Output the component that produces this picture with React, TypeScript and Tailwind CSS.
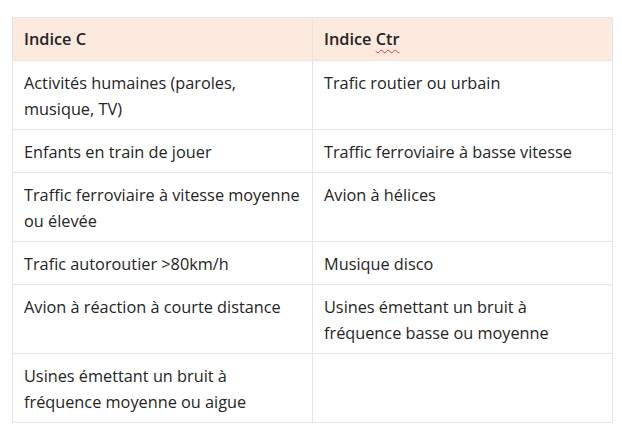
import React from "react";

const rows: [string[], string[]][] = [
  [["Activités humaines (paroles,", "musique, TV)"], ["Trafic routier ou urbain"]],
  [["Enfants en train de jouer"], ["Traffic ferroviaire à basse vitesse"]],
  [["Traffic ferroviaire à vitesse moyenne", "ou élevée"], ["Avion à hélices"]],
  [["Trafic autoroutier >80km/h"], ["Musique disco"]],
  [["Avion à réaction à courte distance"], ["Usines émettant un bruit à", "fréquence basse ou moyenne"]],
  [["Usines émettant un bruit à", "fréquence moyenne ou aigue"], []],
];

function Cell({ lines }: { lines: string[] }) {
  return (
    <td className="border border-[#e5e5e5] px-[11px] pt-[9px] pb-[7px] align-top text-[16.3px] leading-[26px] text-[#242424]">
      {lines.map((l, i) => (
        <React.Fragment key={i}>
          {i > 0 && <br />}
          <span className="whitespace-nowrap">{l}</span>
        </React.Fragment>
      ))}
    </td>
  );
}

export default function App() {
  return (
    <div className="w-[622px] h-[434px] bg-white pt-[17px] pl-[12px]" style={{ fontFamily: "'Open Sans', 'Noto Sans', sans-serif" }}>
      <table className="w-[600px] border-collapse table-fixed">
        <thead>
          <tr className="bg-[#fbeadd]">
            <th className="w-[300px] border border-[#e5e5e5] px-[11px] pt-[8px] pb-[8px] text-left align-top text-[16.3px] leading-[26px] font-semibold text-[#242424]">
              Indice C
            </th>
            <th className="w-[300px] border border-[#e5e5e5] px-[11px] pt-[8px] pb-[8px] text-left align-top text-[16.3px] leading-[26px] font-semibold text-[#242424]">
              Indice <span className="underline decoration-wavy decoration-[#e53935] decoration-1 underline-offset-[4px]">Ctr</span>
            </th>
          </tr>
        </thead>
        <tbody>
          {rows.map((r, i) => (
            <tr key={i}>
              <Cell lines={r[0]} />
              <Cell lines={r[1]} />
            </tr>
          ))}
        </tbody>
      </table>
    </div>
  );
}
